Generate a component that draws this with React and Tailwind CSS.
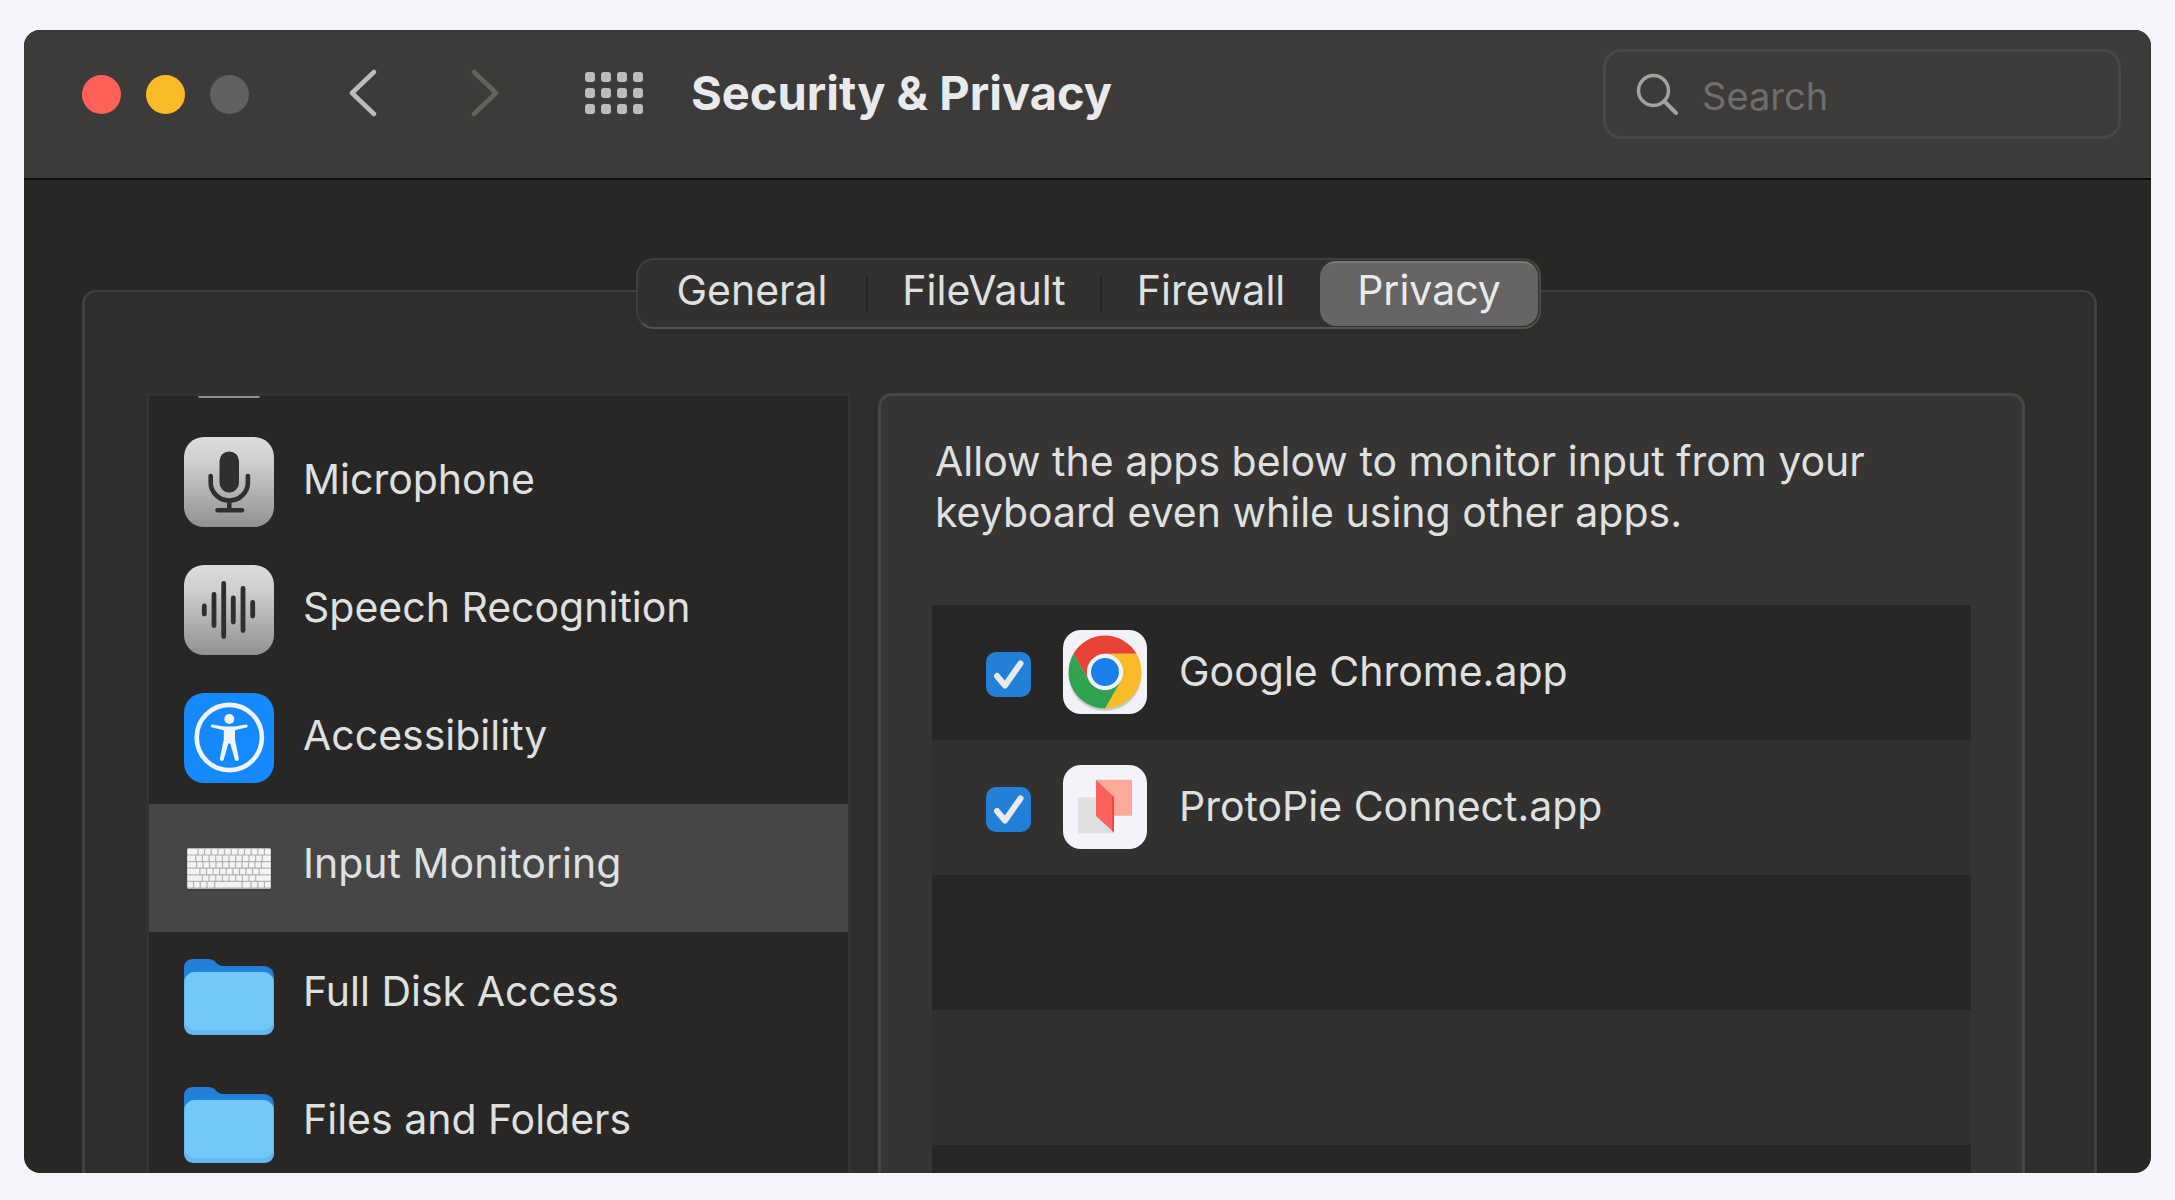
import React from "react";

function MicIcon() {
  return (
    <svg viewBox="0 0 90 90" className="size-[90px] shrink-0" aria-hidden="true">
      <defs>
        <linearGradient id="mic-bg" x1="0" y1="0" x2="0" y2="1">
          <stop offset="0" stopColor="#dcdddf" />
          <stop offset="0.3" stopColor="#cbcdce" />
          <stop offset="1" stopColor="#92918f" />
        </linearGradient>
      </defs>
      <rect width="90" height="90" rx="20" fill="url(#mic-bg)" />
      <rect x="35.5" y="14.5" width="19.5" height="41" rx="9.7" fill="#302f2d" />
      <path
        d="M26.700 39V45.500a18.600 18 0 0 0 37.200 0V39M45.300 64V72M33.500 73.300H58"
        fill="none"
        stroke="#302f2d"
        strokeWidth="4.600"
        strokeLinecap="round"
      />
    </svg>
  );
}

function WaveIcon() {
  return (
    <svg viewBox="0 0 90 90" className="size-[90px] shrink-0" aria-hidden="true">
      <defs>
        <linearGradient id="wave-bg" x1="0" y1="0" x2="0" y2="1">
          <stop offset="0" stopColor="#dcdddf" />
          <stop offset="0.3" stopColor="#cbcdce" />
          <stop offset="1" stopColor="#92918f" />
        </linearGradient>
      </defs>
      <rect width="90" height="90" rx="20" fill="url(#wave-bg)" />
      <path
        d="M20.300 41V49M30 29.500V60.500M39.700 18.500V71.500M49.300 33V57M59 23.500V65.500M68.700 37.500V51"
        stroke="#302f2d"
        strokeWidth="4.800"
        strokeLinecap="round"
      />
    </svg>
  );
}

function AccessibilityIcon() {
  return (
    <svg viewBox="0 0 90 90" className="size-[90px] shrink-0" aria-hidden="true">
      <rect width="90" height="90" rx="20" fill="#158aff" />
      <circle cx="45.300" cy="44.500" r="32.600" fill="none" stroke="#f3f4fa" strokeWidth="4.600" />
      <circle cx="45.300" cy="26" r="5" fill="#f3f4fa" />
      <path
        d="M28.500 31.400L40 33.400H50.500L62 31.400C64 31.300 64.200 34.200 62.400 34.600L51 37.300V46.500L54.800 65.500C55 68.300 51.500 68.800 50.800 66.300L46.200 50.500H44.400L39.800 66.300C39 68.800 35.600 68.300 35.900 65.500L39.800 46.500V37.300L28.200 34.600C26.300 34.200 26.500 31.300 28.500 31.400Z"
        fill="#f3f4fa"
      />
    </svg>
  );
}

const KEY_ROWS = [
  [9, 5, 5, 5, 5, 5, 5, 5, 5, 5, 5, 5],
  [7, 5, 5, 5, 5, 5, 5, 5, 5, 5, 5, 7],
  [8, 5, 5, 5, 5, 5, 5, 5, 5, 5, 5, 8],
  [11, 5, 5, 5, 5, 5, 5, 5, 5, 5, 10],
  [13, 5, 5, 5, 5, 5, 5, 5, 5, 13],
  [5, 5, 5, 6, 24, 7, 5, 5, 5],
];

function KeyboardIcon() {
  const keys = [];
  KEY_ROWS.forEach((row, r) => {
    const total = row.reduce((a, b) => a + b, 0);
    const gap = 1.2;
    const scale = (83 - gap * (row.length - 1)) / total;
    let x = 3.5;
    row.forEach((w, i) => {
      keys.push(
        <rect key={`${r}-${i}`} x={x} y={28 + r * 6.6} width={w * scale} height="5.4" rx="0.8" fill="#f4f4f5" />
      );
      x += w * scale + gap;
    });
  });
  return (
    <svg viewBox="0 0 90 90" className="size-[90px] shrink-0" aria-hidden="true">
      <rect x="3" y="28" width="84" height="41.500" rx="1.500" fill="#2f2f2f" opacity="0.5" />
      <rect x="3" y="27" width="84" height="41" rx="1.500" fill="#b4b5b5" />
      {keys}
    </svg>
  );
}

function FolderIcon() {
  return (
    <svg viewBox="0 0 90 90" className="size-[90px] shrink-0" aria-hidden="true">
      <path
        d="M0 32V19C0 13 4 10 9 10H24C28 10 30 11.500 32.500 14C35 16.500 37 17 40 17H79C86 17 90 21 90 28V50H0Z"
        fill="#2280d8"
      />
      <rect y="24" width="90" height="62" rx="9" fill="#62b7ee" />
      <rect x="1" y="23" width="88" height="58" rx="9" fill="#73c8f9" />
    </svg>
  );
}

function ChromeIcon() {
  return (
    <svg viewBox="0 0 84 84" className="size-[84px] shrink-0" aria-hidden="true">
      <rect width="84" height="84" rx="18" fill="#f1f2f7" />
      <ellipse cx="42" cy="45" rx="36.500" ry="36" fill="#c9cacd" />
      <path d="M10.400 23.750A36.500 36.500 0 0 1 73.600 23.750H42V42L26.200 51.100Z" fill="#e84435" />
      <path d="M73.600 23.750A36.500 36.500 0 0 1 42 78.500L57.800 51.100L42 42V23.750Z" fill="#fabb28" />
      <path d="M42 78.500A36.500 36.500 0 0 1 10.400 23.750L26.200 51.100L42 42L57.800 51.100Z" fill="#31a24f" />
      <circle cx="42" cy="42" r="18.200" fill="#f3f4fa" />
      <circle cx="42" cy="42" r="14" fill="#1a80ec" />
    </svg>
  );
}

function ProtoPieIcon() {
  return (
    <svg viewBox="0 0 84 84" className="size-[84px] shrink-0" aria-hidden="true">
      <rect width="84" height="84" rx="18" fill="#f3f4fa" />
      <rect x="15" y="32.500" width="36" height="36" rx="1" fill="#dfdfe0" />
      <rect x="33" y="14.700" width="36" height="36" rx="1" fill="#fea999" />
      <path d="M33 15L51 32V67.500L33 51Z" fill="#fd625a" />
      <path d="M49 30.500L51 32V67.500L49 65.700Z" fill="#e84a40" />
    </svg>
  );
}

const CATEGORIES = [
  { label: "Microphone", Icon: MicIcon },
  { label: "Speech Recognition", Icon: WaveIcon },
  { label: "Accessibility", Icon: AccessibilityIcon },
  { label: "Input Monitoring", Icon: KeyboardIcon, selected: true },
  { label: "Full Disk Access", Icon: FolderIcon },
  { label: "Files and Folders", Icon: FolderIcon },
];

const APPS = [
  { label: "Google Chrome.app", Icon: ChromeIcon },
  { label: "ProtoPie Connect.app", Icon: ProtoPieIcon },
];

function Toolbar() {
  return (
    <header className="flex h-[150px] shrink-0 items-start border-b-2 border-[#0e0d0c] bg-[#3c3b39] pt-[19px] pr-[30px] pl-[58px]">
      <div className="flex h-[90px] items-center gap-[25px]">
        <button aria-label="Close" className="size-[39px] rounded-full bg-[#ff6159]" />
        <button aria-label="Minimize" className="size-[39px] rounded-full bg-[#fabb28]" />
        <button aria-label="Zoom" className="size-[39px] rounded-full bg-[#60605e]" />
      </div>
      <div className="ml-[98px] flex h-[88px] items-center">
        <button aria-label="Back" className="mr-[90px]">
          <svg viewBox="0 0 32 48" className="h-12 w-8" fill="none" stroke="#bbbdbc" strokeWidth="4.500" strokeLinecap="round" strokeLinejoin="round">
            <path d="M27 3L5 24L27 45" />
          </svg>
        </button>
        <button aria-label="Forward" className="mr-[84px]">
          <svg viewBox="0 0 32 48" className="h-12 w-8" fill="none" stroke="#63625f" strokeWidth="4.500" strokeLinecap="round" strokeLinejoin="round">
            <path d="M5 3L27 24L5 45" />
          </svg>
        </button>
        <button aria-label="Show all" className="grid grid-cols-4 gap-1.5">
          {Array.from({ length: 12 }, (_, i) => (
            <span key={i} className="size-2.5 rounded-[3px] bg-[#bbbdbc]" />
          ))}
        </button>
      </div>
      <h1 className="ml-12 text-[47px] leading-[88px] font-bold whitespace-nowrap text-[#e9eaeb]">Security &amp; Privacy</h1>
      <label className="ml-auto flex h-[90px] w-[518px] items-center gap-6 rounded-[18px] border-[3px] border-[#484745] px-[30px]">
        <svg viewBox="0 0 42 42" className="size-[42px] shrink-0" fill="none" stroke="#a2a2a0" strokeWidth="3.500" strokeLinecap="round" aria-hidden="true">
          <circle cx="17.500" cy="17.500" r="15" />
          <path d="M28.500 28.500L40 40" strokeWidth="4" />
        </svg>
        <input
          type="search"
          aria-label="Search"
          placeholder="Search"
          className="w-full min-w-0 bg-transparent pt-1 text-[38px] text-[#e0e0e0] outline-none placeholder:text-[#6f6e6c]"
        />
      </label>
    </header>
  );
}

function Tabs() {
  return (
    <nav
      aria-label="Sections"
      className="-mt-[34px] ml-1.5 flex h-[71px] items-stretch self-center rounded-[18px] border-2 border-t-[#403f3d] border-r-[#4b4a48] border-b-[#555452] border-l-[#403f3d] bg-[#32312f] text-[41px] leading-[61px] text-[#dfe0e0]"
    >
      <button className="w-[228px] pb-1.5">General</button>
      <span className="my-[15px] w-0.5 bg-[#272624]" />
      <button className="w-[232px] pb-1.5">FileVault</button>
      <span className="my-[15px] w-0.5 bg-[#272624]" />
      <button className="w-[218px] pb-1.5">Firewall</button>
      <button aria-pressed="true" className="my-px mr-px w-[218px] rounded-2xl border-t-2 border-[#7b7a78] bg-[#666563] pb-2 leading-[55px] text-[#e9eaeb]">
        Privacy
      </button>
    </nav>
  );
}

function Sidebar() {
  return (
    <aside className="overflow-hidden border-x-[3px] border-t-[3px] border-[#323431] bg-[#282725]">
      <div className="flex h-6 justify-start pl-[49px]">
        <span className="h-0.5 w-[62px] rounded-b bg-[#92918f]" />
      </div>
      <ul>
        {CATEGORIES.map(({ label, Icon, selected }) => (
          <li key={label}>
            <button
              className={`flex h-32 w-full items-center gap-[29px] pb-1 pl-[35px] text-left whitespace-nowrap ${selected ? "bg-[#464646]" : ""}`}
            >
              <Icon />
              <span className="pb-1">{label}</span>
            </button>
          </li>
        ))}
      </ul>
    </aside>
  );
}

function AppRow({ label, Icon }) {
  return (
    <label className="flex h-[135px] items-center pb-0.5 pl-[54px]">
      <span className="relative mt-1.5 size-[45px] shrink-0">
        <input type="checkbox" defaultChecked className="peer size-full appearance-none rounded-[10px] bg-[#666563] checked:bg-[#2280d8]" />
        <svg viewBox="0 0 45 45" className="pointer-events-none absolute inset-0 hidden peer-checked:block" fill="none" stroke="#e9eaeb" strokeWidth="6" strokeLinecap="round" strokeLinejoin="round" aria-hidden="true">
          <path d="M11 24L19 33.500L34.500 11.500" />
        </svg>
      </span>
      <span className="ml-8 shrink-0">
        <Icon />
      </span>
      <span className="ml-8 whitespace-nowrap">{label}</span>
    </label>
  );
}

function AppsPanel() {
  return (
    <section className="overflow-hidden rounded-t-[14px] border-x-[3px] border-t-[3px] border-[#484745] bg-[#363533] pt-10 pr-[51px] pl-[51px]">
      <p className="ml-[3px] leading-[51px]">
        Allow the apps below to monitor input from your
        <br />
        keyboard even while using other apps.
      </p>
      <ul className="mt-[67px]">
        {APPS.map((app) => (
          <li key={app.label} className="h-[135px] odd:bg-[#282725] even:bg-[#32312f]">
            <AppRow {...app} />
          </li>
        ))}
        <li className="h-[135px] bg-[#282725]" />
        <li className="h-[135px] bg-[#32312f]" />
        <li className="h-[135px] bg-[#282725]" />
      </ul>
    </section>
  );
}

export default function App() {
  return (
    <div className="flex h-screen flex-col bg-[#f3f5fb] px-6 pt-[30px] pb-[27px] font-['Inter',sans-serif]">
      <div className="flex min-h-0 flex-1 flex-col overflow-hidden rounded-2xl bg-[#282725]">
        <Toolbar />
        <main className="flex min-h-0 flex-1 flex-col pt-[110px] pr-[54px] pl-[58px]">
          <div className="flex min-h-0 flex-1 flex-col rounded-t-[14px] border-x-[3px] border-t-2 border-[#42413f] bg-[#2f2e2c] pr-[69px] pl-[61px]">
            <Tabs />
            <div className="mt-16 grid min-h-0 flex-1 grid-cols-[705fr_1147fr] gap-[27px] text-[41px] text-[#dfe0e0]">
              <Sidebar />
              <AppsPanel />
            </div>
          </div>
        </main>
      </div>
    </div>
  );
}
